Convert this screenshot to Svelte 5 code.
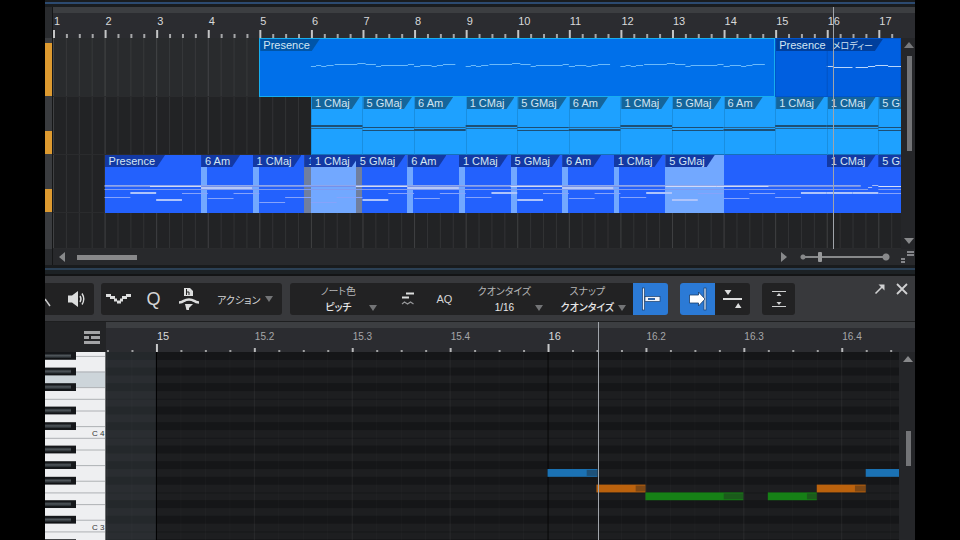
<script>
  // arrangement timeline, positions are in bars
  const firstBar = 1;
  const visibleBars = 16.44;
  const barX = (bar) => ((bar - firstBar) / visibleBars) * 100;
  const barW = (bars) => (bars / visibleBars) * 100;

  const bars = Array.from({ length: 17 }, (_, i) => i + 1);
  const beats = Array.from({ length: 67 }, (_, i) => 1 + i / 4);
  const playBar = 16.12;

  const chordNames = ['1 CMaj', '5 GMaj', '6 Am'];
  const melodyClips = [
    { start: 5, end: 15, name: 'Presence', selected: true },
    { start: 15, end: 17.44, name: 'Presence', extra: 'メロディー' },
  ];
  const padClips = bars.slice(5).map((bar, i) => ({
    start: bar,
    end: Math.min(bar + 1, 17.44),
    chord: bar < 15 ? i % 3 : bar === 17 ? 1 : 0,
  }));
  const bassClips = [
    { start: 2, end: 3.87, name: 'Presence' },
    { start: 3.87, end: 4.87, name: '6 Am' },
    { start: 4.87, end: 5.87, name: '1 CMaj' },
    { start: 5.87, end: 6, name: '1' },
    { start: 6, end: 6.87, name: '1 CMaj' },
    { start: 6.87, end: 7.87, name: '5 GMaj' },
    { start: 7.87, end: 8.87, name: '6 Am' },
    { start: 8.87, end: 9.87, name: '1 CMaj' },
    { start: 9.87, end: 10.87, name: '5 GMaj' },
    { start: 10.87, end: 11.87, name: '6 Am' },
    { start: 11.87, end: 12.87, name: '1 CMaj' },
    { start: 12.87, end: 16, name: '5 GMaj' },
    { start: 16, end: 17, name: '1 CMaj' },
    { start: 17, end: 17.44, name: '5 GMaj' },
  ];
  const overlaps = [
    { start: 3.87, end: 3.99 },
    { start: 4.87, end: 4.99 },
    { start: 5.87, end: 6, double: true },
    { start: 6, end: 6.87 },
    { start: 6.87, end: 6.99, double: true },
    { start: 7.87, end: 7.98 },
    { start: 8.87, end: 8.98 },
    { start: 9.87, end: 9.99 },
    { start: 10.87, end: 10.99 },
    { start: 11.87, end: 11.98 },
    { start: 12.86, end: 14 },
  ];

  // [offset in bars, length, y]
  const phrase = [
    [0, 0.1, 28], [0.1, 0.1, 27], [0.2, 0.1, 28], [0.3, 0.14, 27],
    [0.46, 0.44, 26], [0.9, 0.16, 25], [1.06, 0.2, 26], [1.26, 0.1, 28],
    [1.36, 0.52, 27], [1.88, 0.12, 26], [2, 0.12, 28], [2.12, 0.22, 27],
    [2.34, 0.1, 28], [2.44, 0.12, 27], [2.56, 0.24, 26],
  ];
  const melodyNotes = [6, 9, 12].flatMap((s) => phrase.map(([x, w, y]) => [s + x, w, y]));
  const nextNotes = [
    [16, 0.12, 28], [16.12, 0.38, 29], [16.56, 0.24, 29], [16.8, 0.14, 28],
    [16.94, 0.25, 27], [17.19, 0.25, 28],
  ];
  // half-bar bass notes from bar 2
  const bassY = [42, 37, 44, 38, 43, 38, 47, 42, 47, 42, 44, 38, 43, 38, 42, 37, 44, 38,
    43, 38, 42, 37, 44, 38, 43, 38, 42, 37, 37, 37, 38];
  const topNotes = [[3.87, 1], [7.87, 1], [10.87, 1]];
  const midNotes = [[2.88, 0.99], [6.87, 1], [9.87, 1], [12.87, 1], [13.87, 1]];

  // piano roll, positions are in beats from bar 15
  const firstBeat = -0.51;
  const visibleBeats = 8.1;
  const beatX = (beat) => ((beat - firstBeat) / visibleBeats) * 100;
  const visibleRows = 24.1;
  const rowY = (row) => (row / visibleRows) * 100;

  const beatLabels = ['15', '15.2', '15.3', '15.4', '16', '16.2', '16.3', '16.4'];
  const steps = Array.from({ length: 33 }, (_, i) => i / 4 - 0.5);
  const blackRows = [0, 2, 4, 7, 9, 12, 14, 16, 19, 21, 24];
  const keyLines = [0.5, 2.5, 4.5, 6, 7.5, 9.5, 11, 12.5, 14.5, 16.5, 18, 19.5, 21.5, 23];
  const notes = [
    { beat: 4, len: 0.51, row: 15, tail: 0.11, color: '#1b72b4' },
    { beat: 4.5, len: 0.5, row: 17, tail: 0.1, color: '#bb620d' },
    { beat: 5, len: 1, row: 18, tail: 0.2, color: '#168016' },
    { beat: 6.25, len: 0.5, row: 18, tail: 0.1, color: '#168016' },
    { beat: 6.75, len: 0.5, row: 17, tail: 0.11, color: '#bb620d' },
    { beat: 7.25, len: 0.34, row: 15, tail: 0, color: '#1b72b4' },
  ];
</script>

<main>
  <div class="splitter top"></div>

  <section class="arrange">
    <div class="head-ruler"></div>
    <div class="ruler song-ruler">
      <svg width="100%" height="100%">
        {#each beats as b}
          {#if Number.isInteger(b)}
            <rect x="{barX(b)}%" y="23" width="2" height="8" fill="#c4c5c6" />
          {:else}
            <rect x="{barX(b)}%" y="27" width="2" height="4" fill="#a6a7a9" />
          {/if}
        {/each}
        {#each bars as n}
          <text x="{barX(n)}%" dx="1" y="18">{n}</text>
        {/each}
      </svg>
    </div>
    <div class="ruler corner"></div>

    <div class="heads">
      <div class="head"><i class="full"></i></div>
      <div class="head"><i></i></div>
      <div class="head"><i></i></div>
      <div class="head"></div>
    </div>

    <div class="lanes">
      <svg class="grid" width="100%" height="100%">
        {#each beats as b}
          <rect x="{barX(b)}%" y="0" width="1" height="100%" fill={Number.isInteger(b) ? '#404143' : '#323335'} />
        {/each}
      </svg>

      <div class="lane first">
        {#each melodyClips as clip}
          <div class="clip melody" class:selected={clip.selected} style="left: {barX(clip.start)}%; width: {barW(clip.end - clip.start)}%">
            <span class="tag">{clip.name}{#if clip.extra}<span class="extra">{clip.extra}</span>{/if}</span>
          </div>
        {/each}
        <svg class="notes" width="100%" height="100%">
          {#each melodyNotes as [x, w, y]}
            <rect x="{barX(x)}%" {y} width="{barW(w)}%" height="1" fill="#6bb9fa" />
          {/each}
          {#each nextNotes as [x, w, y]}
            <rect x="{barX(x)}%" {y} width="{barW(w)}%" height="1" fill="#b9d6fb" />
          {/each}
          <rect x="{barX(16)}%" y="13" width="1" height="100%" fill="#0053c4" />
        </svg>
      </div>

      <div class="lane">
        {#each padClips as clip}
          <div class="clip pad" style="left: {barX(clip.start)}%; width: {barW(clip.end - clip.start)}%">
            <span class="tag">{chordNames[clip.chord]}</span>
          </div>
        {/each}
        <svg class="notes" width="100%" height="100%">
          {#each padClips as clip}
            {@const x = barX(clip.start) + '%'}
            {@const w = barW(clip.end - clip.start) + '%'}
            {#if clip.chord === 0}
              <rect {x} y="28" width={w} height="2" fill="#1d4f75" />
              <rect {x} y="31" width={w} height="1" fill="#28638f" />
            {:else if clip.chord === 1}
              <rect {x} y="30" width={w} height="1" fill="#1d4f75" />
              <rect {x} y="33" width={w} height="1" fill="#1d4f75" />
            {:else}
              <rect {x} y="30" width={w} height="1" fill="#28638f" />
              <rect {x} y="32" width={w} height="2" fill="#1d4f75" />
            {/if}
          {/each}
        </svg>
      </div>

      <div class="lane">
        {#each bassClips as clip}
          <div class="clip bass" style="left: {barX(clip.start)}%; width: {barW(clip.end - clip.start)}%"></div>
        {/each}
        {#each overlaps as o}
          <div class="overlap" class:double={o.double} style="left: {barX(o.start)}%; width: {barW(o.end - o.start)}%"></div>
        {/each}
        <svg class="notes" width="100%" height="100%">
          <rect x="{barX(2)}%" y="30" width="{barW(14.66)}%" height="1" fill="#8ea6ea" />
          <rect x="{barX(2)}%" y="31" width="{barW(14.66)}%" height="1" fill="#7490ea" />
          <rect x="{barX(2)}%" y="34" width="{barW(14.8)}%" height="1" fill="#7f9cf0" />
          <rect x="{barX(16.8)}%" y="32" width="{barW(0.08)}%" height="1" fill="#a5bbf5" />
          <rect x="{barX(16.88)}%" y="30" width="{barW(0.12)}%" height="1" fill="#a5bbf5" />
          <rect x="{barX(17)}%" y="31" width="{barW(0.44)}%" height="1" fill="#d5dffa" />
          <rect x="{barX(17)}%" y="34" width="{barW(0.44)}%" height="1" fill="#7f9cf0" />
          {#each topNotes as [x, w]}
            <rect x="{barX(x)}%" y="32" width="{barW(w)}%" height="2" fill="#b6c7f7" />
          {/each}
          {#each midNotes as [x, w]}
            <rect x="{barX(x)}%" y="31" width="{barW(w)}%" height="1" fill="#d0dafa" />
          {/each}
          {#each bassY as y, i}
            <rect x="{barX(2 + i / 2)}%" {y} width="{barW(0.5)}%" height={y === 37 || y === 44 ? 2 : 1} fill={y === 37 || y === 44 ? '#aec4fb' : '#86a3fb'} />
          {/each}
        </svg>
        {#each bassClips as clip}
          <div class="clip" style="left: {barX(clip.start)}%; width: {barW(clip.end - clip.start)}%">
            <span class="tag deep">{clip.name}</span>
          </div>
        {/each}
      </div>

      <div class="lane"></div>
    </div>

    <div class="vbar">
      <button aria-label="Scroll up"><svg width="10" height="8"><path d="M5 1L10 7H0z" fill="#77787a" /></svg></button>
      <div class="thumb"></div>
      <button class="down" aria-label="Scroll down"><svg width="10" height="8"><path d="M0 1H10L5 7z" fill="#88898b" /></svg></button>
    </div>

    <div class="head-foot"></div>
    <div class="hbar">
      <button aria-label="Scroll left"><svg width="8" height="10"><path d="M7 0V10L1 5z" fill="#88898b" /></svg></button>
      <div class="thumb"></div>
      <button class="right" aria-label="Scroll right"><svg width="8" height="10"><path d="M1 0V10L7 5z" fill="#88898b" /></svg></button>
      <input class="zoom" type="range" min="0" max="100" value="21" aria-label="Zoom" />
    </div>
    <div class="size">
      <svg width="14" height="14"><path d="M6 3h7M6 6h7" stroke="#85868a" stroke-width="2" /><path d="M0 10h4M0 13h4" stroke="#85868a" stroke-width="2" /></svg>
    </div>

    <div class="playline song">
      <i style="left: {barX(playBar)}%"></i>
    </div>
  </section>

  <div class="splitter"></div>

  <section class="toolbar">
    <div class="group flush">
      <button class="tool cut" aria-label="Pencil">
        <svg width="6" height="32"><path d="M0 16L5 23" stroke="#c8c9ca" stroke-width="1.5" /></svg>
      </button>
      <button class="tool" aria-label="Audition">
        <svg width="20" height="18" viewBox="0 0 20 18">
          <path d="M1 5.5h4L11 1v16l-6-4.500H1z" fill="#dcdddd" />
          <path d="M13 6q2 3 0 6M15 3.500q3.500 5.500 0 11" fill="none" stroke="#dcdddd" stroke-width="1.400" />
        </svg>
      </button>
    </div>

    <div class="group edit">
      <button class="tool" aria-label="Velocity curve">
        <svg width="26" height="12" viewBox="0 0 26 12" fill="#dcdddd">
          <path d="M0 1h5v3H0zM4 3h5v3H4zM8 5.500h3v3H8zM11 7.500h4v3h-4zM14 5.500h3v3h-3zM16 3h5v3h-5zM20 1h5v3h-5z" />
        </svg>
      </button>
      <button class="tool q">Q</button>
      <button class="tool" aria-label="Humanize">
        <svg width="22" height="24" viewBox="0 0 22 24">
          <path d="M6 1h6l3 3v5H6z" fill="#dcdddd" />
          <path d="M8.500 2v6M8.500 5h2.500v3" fill="none" stroke="#222" stroke-width="1" />
          <path d="M1 15.500q3 0 5-1.700q2-1.300 5-1.300t5 1.300q2 1.700 5 1.700" fill="none" stroke="#dcdddd" stroke-width="2.600" />
          <path d="M7 17h8l-4 4v2H8.500z" fill="#dcdddd" />
        </svg>
      </button>
      <button class="action">アクション <svg width="8" height="6"><path d="M0 0H8L4 6z" fill="#737476" /></svg></button>
    </div>

    <div class="joined">
      <div class="group fields">
        <div class="field">
          <label for="note-color">ノート色</label>
          <select id="note-color"><option>ピッチ</option></select>
          <svg width="8" height="6"><path d="M0 0H8L4 6z" fill="#737476" /></svg>
        </div>
        <div class="pair">
          <button class="tool small" aria-label="Show ghost notes">
            <svg width="14" height="16" viewBox="0 0 14 16">
              <path d="M5 2.500h8M1 6.500h7" stroke="#dcdddd" stroke-width="2" />
              <path d="M1 13l2.500-2 3 2 3-2 3 2" fill="none" stroke="#97989a" stroke-width="1.200" />
            </svg>
          </button>
          <button class="tool small">AQ</button>
        </div>
        <div class="field">
          <label for="quantize">クオンタイズ</label>
          <select id="quantize"><option>1/16</option></select>
          <svg width="8" height="6"><path d="M0 0H8L4 6z" fill="#737476" /></svg>
        </div>
        <div class="field">
          <label for="snap">スナップ</label>
          <select id="snap"><option>クオンタイズ</option></select>
          <svg width="8" height="6"><path d="M0 0H8L4 6z" fill="#737476" /></svg>
        </div>
      </div>
      <button class="tool on end" aria-label="Snap">
        <svg width="20" height="24" viewBox="0 0 20 24">
          <rect x="1.500" y="1" width="2" height="22" fill="#e8eef5" stroke="#1a3c68" stroke-width=".7" />
          <rect x="4" y="9.500" width="15" height="5" fill="#f0f3f7" stroke="#1a3c68" stroke-width=".7" />
          <rect x="7" y="11" width="7" height="2" fill="#2a62a8" />
        </svg>
      </button>
    </div>

    <div class="group mode">
      <button class="tool on start" aria-label="Autoscroll">
        <svg width="18" height="24" viewBox="0 0 18 24">
          <rect x="15" y="1" width="2" height="22" fill="#d8e6f7" stroke="#1a3c68" stroke-width=".7" />
          <path d="M0.500 8h9V5l6.500 7-6.500 7v-3h-9z" fill="#fff" stroke="#1a3c68" stroke-width=".8" />
        </svg>
      </button>
      <button class="tool" aria-label="Follow cursor">
        <svg width="20" height="20" viewBox="0 0 20 20" fill="#dcdddd">
          <path d="M1.500 1h7L5 6zM0 9h19v2H0zM12 19h6.500l-3.300-5z" />
        </svg>
      </button>
    </div>

    <div class="group">
      <button class="tool fit" aria-label="Fit height">
        <svg width="16" height="18" viewBox="0 0 16 18" fill="#cfd0d1">
          <path d="M1 1h14v1H1zM1 16h14v1H1zM5.500 6L8 3l2.500 3zM5.500 12h5L8 15z" />
        </svg>
      </button>
    </div>

    <div class="window">
      <button aria-label="Detach">
        <svg width="12" height="12"><path d="M1.500 10.500L9 3" stroke="#d0d1d2" stroke-width="1.600" /><path d="M4.500 1.500H10.500V7.500z" fill="#d0d1d2" /></svg>
      </button>
      <button aria-label="Close">
        <svg width="12" height="12"><path d="M1 1L11 11M11 1L1 11" stroke="#d0d1d2" stroke-width="1.800" /></svg>
      </button>
    </div>
  </section>

  <section class="editor">
    <div class="key-head">
      <svg width="16" height="13" fill="#a3a4a6"><path d="M0 0h16v3H0zM0 5h5v3H0zM7 5h9v3H7zM0 10h16v3H0z" /></svg>
    </div>
    <div class="ruler beat-ruler">
      <svg width="100%" height="100%">
        {#each steps as s}
          {#if s % 4 === 0}
            <rect x="{beatX(s)}%" y="22" width="2" height="8" fill="#c8c9ca" />
          {:else if Number.isInteger(s)}
            <rect x="{beatX(s)}%" y="26" width="2" height="4" fill="#b8b9ba" />
          {:else}
            <rect x="{beatX(s)}%" y="28" width="2" height="2" fill="#a0a1a2" />
          {/if}
        {/each}
        {#each beatLabels as label, i}
          <text class:minor={i % 4 !== 0} x="{beatX(i)}%" dx="1" y="18">{label}</text>
        {/each}
      </svg>
    </div>
    <div class="ruler corner"></div>

    <div class="keys">
      <svg width="100%" height="100%">
        <defs>
          <linearGradient id="ebony" x1="0" y1="0" x2="0" y2="1">
            <stop offset="0" stop-color="#15181b" />
            <stop offset="0.4" stop-color="#50575c" />
            <stop offset="0.8" stop-color="#262b2f" />
            <stop offset="1" stop-color="#0a0c0d" />
          </linearGradient>
        </defs>
        <rect x="0" y="{rowY(2.5)}%" width="100%" height="{rowY(2)}%" fill="#cdd5da" />
        {#each keyLines as line}
          <rect x="0" y="{rowY(line)}%" width="100%" height="1" fill="#aeb1b4" />
        {/each}
        {#each blackRows as row}
          <rect x="0" y="{rowY(row)}%" width="31" height="{rowY(1)}%" fill="#15171a" />
          <rect x="0" y="{rowY(row + 0.2)}%" width="26" height="{rowY(0.65)}%" fill="url(#ebony)" />
        {/each}
        <text x="47" y="{rowY(10.8)}%">C 4</text>
        <text x="47" y="{rowY(22.8)}%">C 3</text>
      </svg>
    </div>

    <div class="roll">
      <svg width="100%" height="100%">
        {#each blackRows as row}
          <rect x="0" y="{rowY(row)}%" width="100%" height="{rowY(1)}%" fill="#151618" />
        {/each}
        {#each [6, 11, 18, 23] as row}
          <rect x="0" y="{rowY(row)}%" width="100%" height="1" fill="#17181a" />
        {/each}
        <rect x="0" y="0" width="{beatX(0)}%" height="100%" fill="#4a5458" fill-opacity="0.3" />
        {#each steps as s}
          <rect x="{beatX(s)}%" y="0" width="1" height="100%" fill="#fff" fill-opacity={Number.isInteger(s) ? 0.06 : 0.025} />
        {/each}
        {#each [0, 4] as s}
          <rect x="{beatX(s)}%" y="0" width="1" height="100%" fill="#000" />
        {/each}
        {#each notes as n}
          <rect x="{beatX(n.beat)}%" y="{rowY(n.row)}%" width="{(n.len / visibleBeats) * 100}%" height="{rowY(1)}%" fill={n.color} />
          <rect x="{beatX(n.beat + n.len - n.tail)}%" y="{rowY(n.row + 0.12)}%" width="{(n.tail / visibleBeats) * 100}%" height="{rowY(0.76)}%" fill="#222" fill-opacity="0.4" />
        {/each}
      </svg>
    </div>

    <div class="vbar">
      <button aria-label="Scroll up"><svg width="10" height="8"><path d="M5 1L10 7H0z" fill="#88898b" /></svg></button>
      <div class="thumb low"></div>
    </div>

    <div class="playline beat">
      <i style="left: {beatX(4.52)}%"></i>
    </div>
  </section>
</main>

<style>
  :global(body) {
    background: #000;
  }
  main {
    display: flex;
    flex-direction: column;
    min-height: 100vh;
    margin: 0 45px;
    overflow: hidden;
    background: #1b1d1f;
    color: #d4d5d6;
    font-family: "Liberation Sans", "Noto Sans CJK JP", sans-serif;
    font-size: 11px;
  }
  button {
    display: flex;
    align-items: center;
    justify-content: center;
    padding: 0;
    border: 0;
    background: none;
    color: inherit;
    font: inherit;
  }
  svg {
    display: block;
    flex: none;
  }
  .splitter {
    height: 11px;
    background: linear-gradient(#191b1d 3px, #2b4055 3px, #2b4055 5px, #1c2124 5px, #1c2124 9px, #131415 9px);
  }
  .splitter.top {
    height: 7px;
    background: linear-gradient(#191c1f 2px, #2c4a70 2px, #2c4a70 4px, #191c1f 4px);
  }

  .arrange {
    position: relative;
    display: grid;
    grid-template-columns: 8px 1fr 14px;
    grid-template-rows: 31px auto 16px;
    background: #28292c;
  }
  .head-ruler {
    background: #292b2e;
    border-right: 1px solid #151617;
  }
  .ruler {
    background: linear-gradient(#3c3e41 6px, #2b2c30 6px);
  }
  .ruler svg {
    overflow: visible;
  }
  .ruler text {
    fill: #d8d9da;
    font-size: 11px;
  }
  .ruler text.minor {
    fill: #a6a7a9;
    font-size: 10px;
  }
  .heads, .lanes {
    display: grid;
    grid-template-rows: 59px 58px 58px 36px;
  }
  .head {
    display: flex;
    flex-direction: column;
    justify-content: flex-end;
    background: #3a3c3f;
    border-right: 1px solid #151617;
  }
  .head i {
    height: 23px;
    margin-bottom: 1px;
    background: #dd9a30;
  }
  .head i.full {
    height: 53px;
  }
  .lanes {
    position: relative;
    overflow: hidden;
    background: #222325;
  }
  .grid {
    position: absolute;
    inset: 0;
  }
  .lane {
    position: relative;
    box-shadow: inset 0 -1px #2a2b2d;
  }
  .lane.first {
    background: rgba(90, 92, 94, 0.15);
  }
  .notes {
    position: absolute;
    inset: 0;
  }
  .clip {
    position: absolute;
    top: 0;
    bottom: 0;
    box-sizing: border-box;
    white-space: nowrap;
  }
  .clip.melody {
    background: #005fe0;
    border: 1px solid #0054cb;
  }
  .clip.melody.selected {
    background: #0070ea;
    border-color: #17aeee;
  }
  .clip.pad {
    background: #1ea1ff;
    border-left: 1px solid #198ee0;
    border-bottom: 1px solid #1670b8;
  }
  .clip.bass {
    background: #2361fd;
  }
  .overlap {
    position: absolute;
    top: 0;
    bottom: 0;
    background: #72a8ff;
  }
  .overlap.double {
    background: #707f9f;
  }
  .tag {
    display: inline-block;
    vertical-align: top;
    height: 12px;
    padding: 0 10px 0 4px;
    background: #15659b;
    clip-path: polygon(0 0, 100% 0, calc(100% - 8px) 100%, 0 100%);
    color: #d3e6f4;
    font-size: 11px;
    line-height: 12px;
  }
  .pad .tag {
    padding-left: 3px;
  }
  .melody .tag {
    background: #003f9c;
    padding-left: 3px;
  }
  .selected .tag {
    background: #0055a8;
  }
  .tag.deep {
    background: #1339a4;
  }
  .extra {
    margin-left: 7px;
    font-size: 9px;
    font-feature-settings: "palt";
  }
  .vbar {
    display: flex;
    flex-direction: column;
    align-items: center;
    padding: 3px 0 4px 2px;
    background: #252629;
  }
  .vbar .thumb {
    width: 5px;
    height: 95px;
    margin-top: 7px;
    background: #737477;
  }
  .vbar .down {
    margin-top: auto;
  }
  .head-foot {
    background: #292b2e;
    border-right: 1px solid #151617;
  }
  .hbar {
    display: flex;
    align-items: center;
    padding: 0 11px 0 5px;
  }
  .hbar .thumb {
    width: 60px;
    height: 5px;
    margin-left: 11px;
    background: #88888a;
  }
  .hbar .right {
    margin-left: auto;
  }
  .zoom {
    appearance: none;
    width: 90px;
    height: 10px;
    margin: 0 0 0 12px;
    background:
      radial-gradient(circle at 3px 5px, #88898b 2px, transparent 3px),
      radial-gradient(circle at 86px 5px, #88898b 3px, transparent 4px),
      linear-gradient(#88898b, #88898b) 2px 4px / 84px 2px no-repeat;
  }
  .zoom::-webkit-slider-thumb {
    appearance: none;
    width: 4px;
    height: 10px;
    border-radius: 1px;
    background: #98999b;
  }
  .playline {
    position: absolute;
    pointer-events: none;
  }
  .playline i {
    position: absolute;
    top: 0;
    bottom: 0;
    width: 1px;
    background: #a0a4aa;
  }
  .playline.song {
    inset: 0 14px 16px 8px;
  }
  .playline.beat {
    inset: 0 16px 0 61px;
  }

  .toolbar {
    display: flex;
    align-items: flex-start;
    padding: 7px 0 6px;
    border-bottom: 1px solid #1e1f20;
    background: #38393c;
  }
  .group {
    display: flex;
    height: 32px;
    margin-right: 8px;
    border-radius: 3px;
    background: #222223;
  }
  .group.flush {
    margin-right: 7px;
    border-radius: 0 3px 3px 0;
  }
  .tool {
    width: 35px;
    height: 32px;
  }
  .tool.cut {
    width: 14px;
    justify-content: flex-start;
  }
  .tool.small {
    width: 32px;
  }
  .tool.fit {
    width: 33px;
  }
  .tool.q {
    font-size: 18px;
  }
  .tool.on {
    background: #2b7ad6;
  }
  .tool.end {
    border-radius: 0 3px 3px 0;
  }
  .tool.start {
    border-radius: 3px 0 0 3px;
  }
  .action {
    gap: 5px;
    padding: 0 9px 0 11px;
    font-size: 10px;
    font-feature-settings: "palt";
  }
  .joined {
    display: flex;
    margin-right: 12px;
  }
  .group.fields {
    gap: 15px;
    margin: 0;
    padding: 0 7px 0 19px;
    border-radius: 3px 0 0 3px;
  }
  .group.mode {
    margin-right: 12px;
  }
  .pair {
    display: flex;
    gap: 4px;
  }
  .field {
    display: grid;
    grid-template-columns: 58px 8px;
    grid-template-rows: 17px 15px;
    column-gap: 2px;
    align-items: center;
    font-size: 10px;
    font-feature-settings: "palt";
    line-height: 16px;
    text-align: center;
  }
  .field label {
    grid-column: 1;
    color: #b4b5b6;
  }
  .field select {
    grid-column: 1;
    width: 100%;
    height: 16px;
    padding: 0;
    border: 0;
    appearance: none;
    background: none;
    color: #e8e8e8;
    font: inherit;
    font-feature-settings: inherit;
    font-weight: 500;
    text-align-last: center;
  }
  .window {
    display: flex;
    gap: 10px;
    margin: 0 7px 0 auto;
  }

  .editor {
    position: relative;
    flex: 1;
    display: grid;
    grid-template-columns: 61px 1fr 16px;
    grid-template-rows: 30px minmax(188px, 1fr);
  }
  .key-head {
    display: flex;
    align-items: center;
    justify-content: flex-end;
    padding-right: 6px;
    background: #232426;
  }
  .keys, .roll {
    position: relative;
    overflow: hidden;
  }
  .keys {
    background: #eeeff1;
    border-right: 1px solid #6a6c6e;
  }
  .keys svg, .roll svg {
    position: absolute;
    inset: 0;
  }
  .keys text {
    fill: #333;
    font-size: 8px;
  }
  .roll {
    background: #1d1e20;
    box-shadow: inset 0 1px #000;
  }
  .vbar .thumb.low {
    height: 35px;
    margin-top: 68px;
  }
</style>
